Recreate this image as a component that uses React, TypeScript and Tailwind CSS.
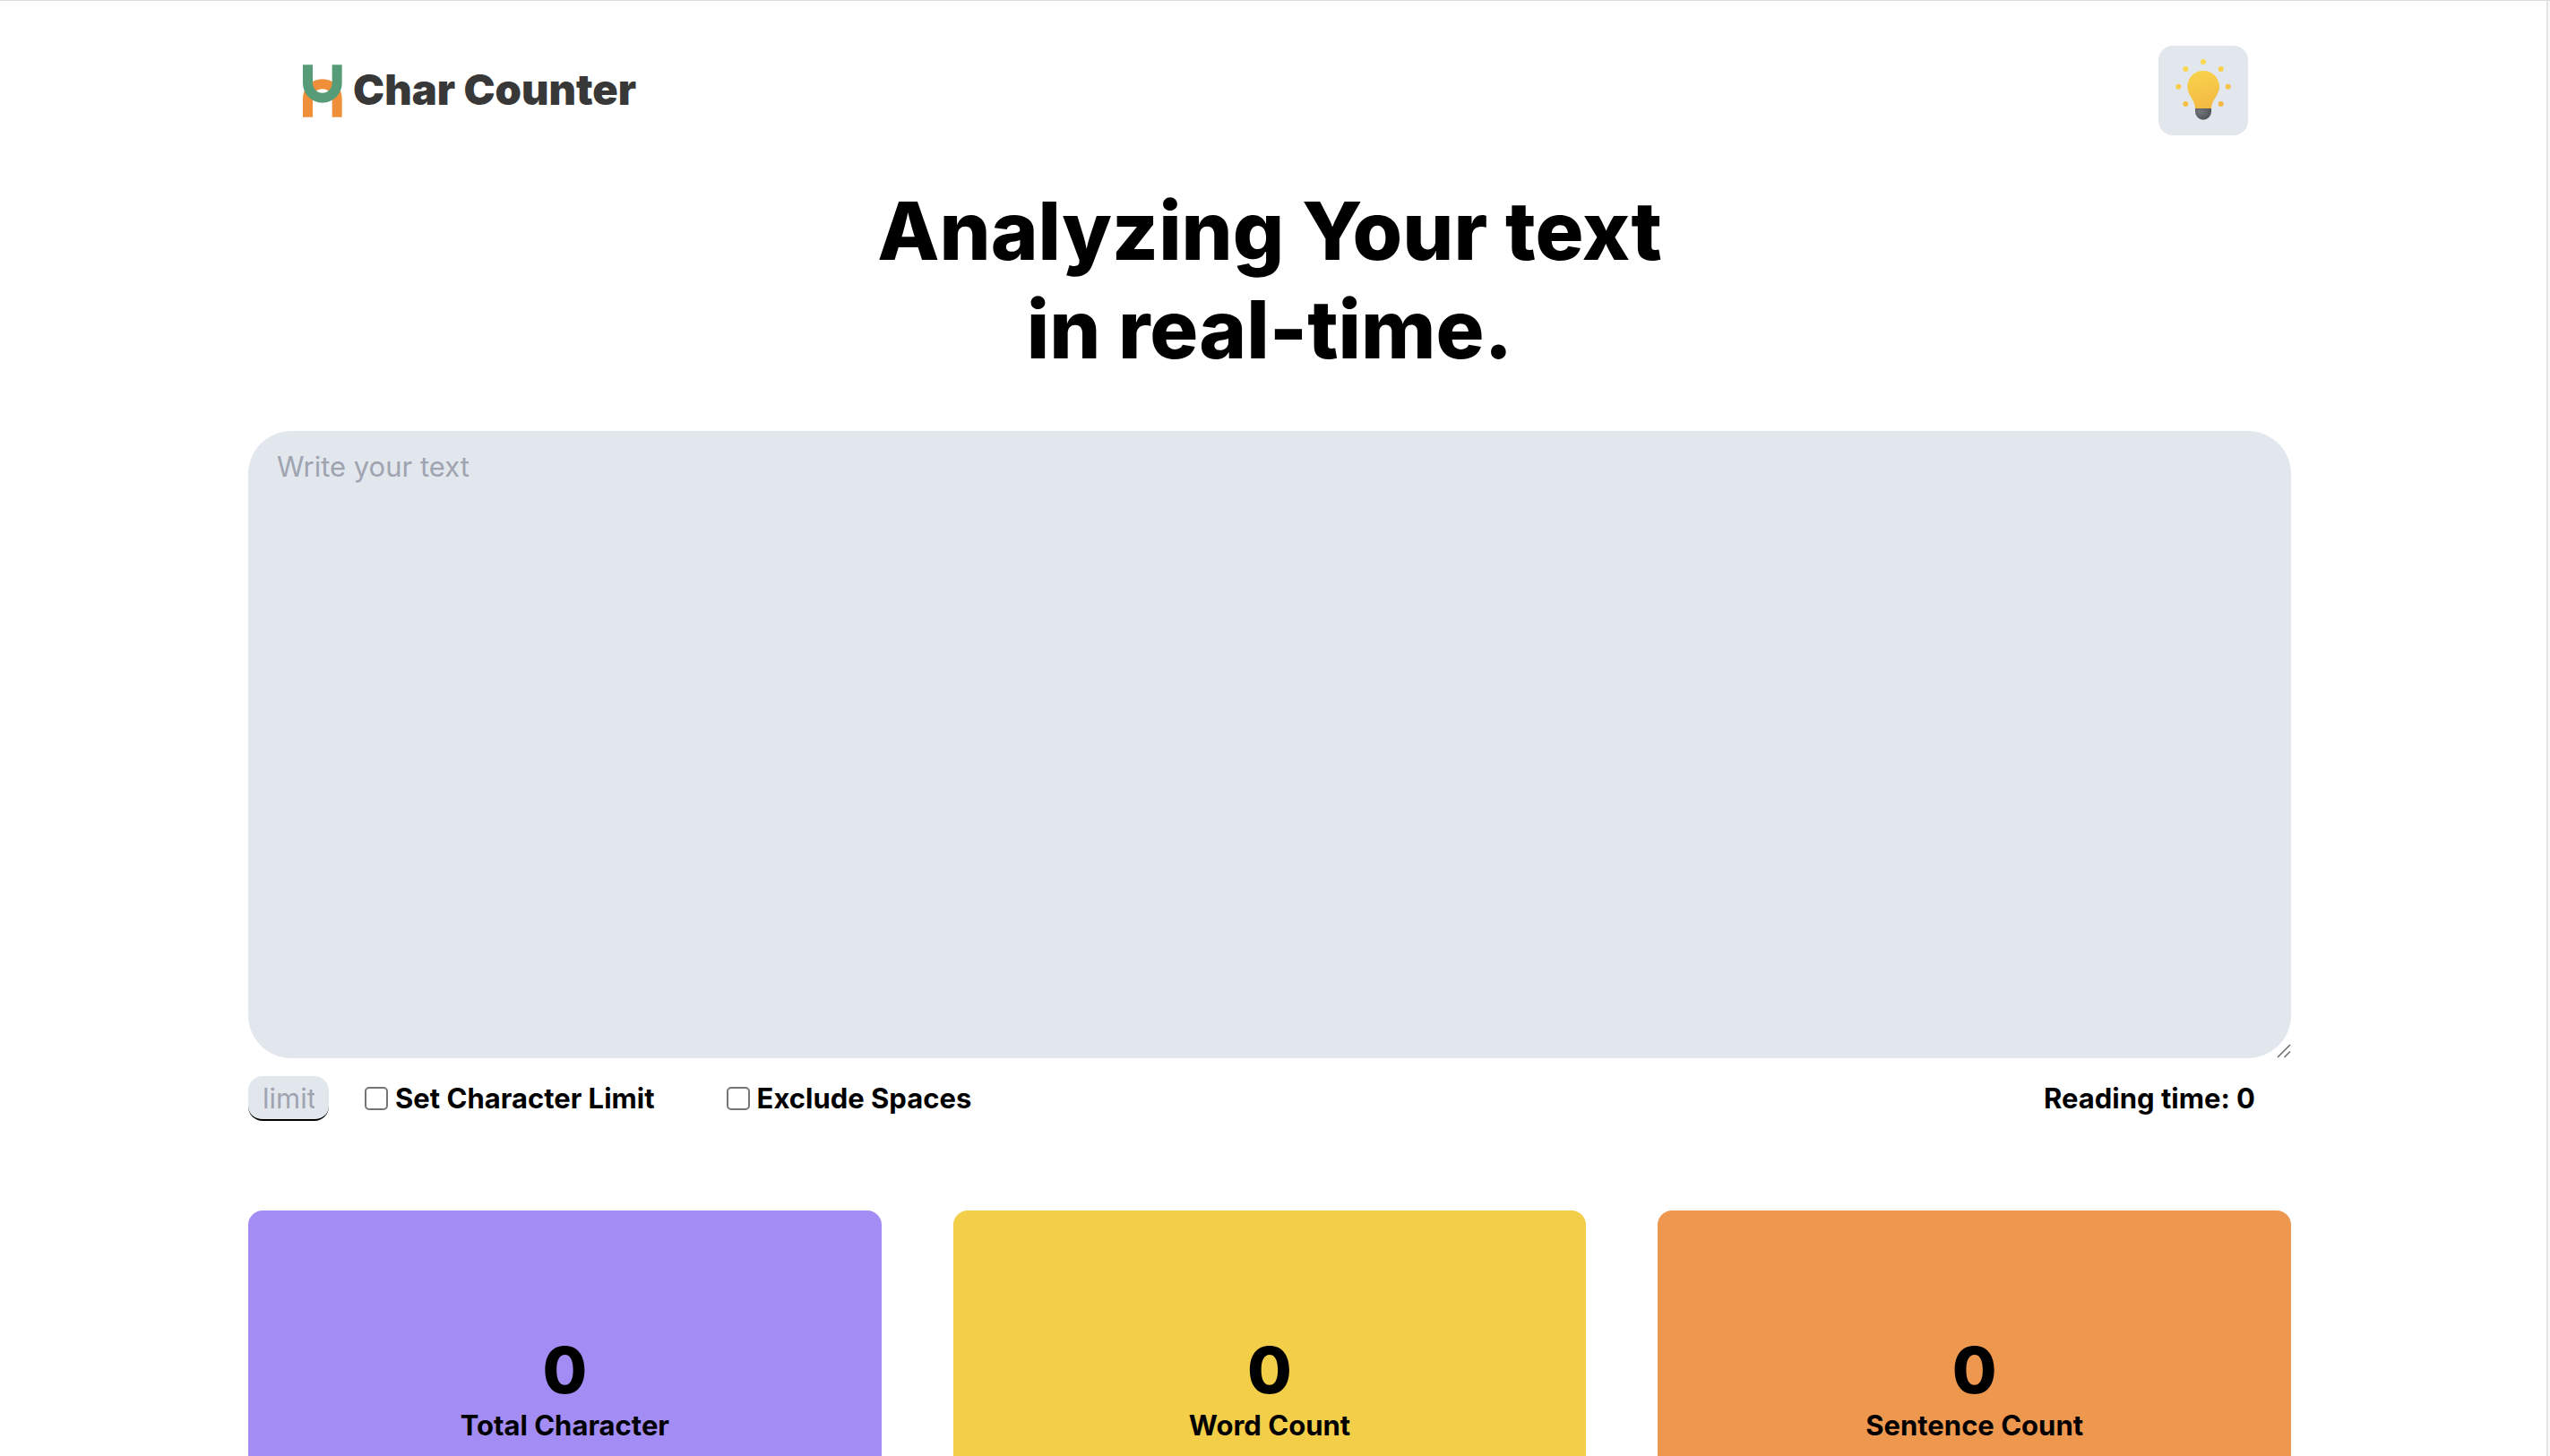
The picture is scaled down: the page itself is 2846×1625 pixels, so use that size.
import { useState } from "react";

const cards = [
  { id: "characters", label: "Total Character", color: "bg-[#a38cf4]" },
  { id: "words", label: "Word Count", color: "bg-[#f2ce49]" },
  { id: "sentences", label: "Sentence Count", color: "bg-[#ee974f]" },
];

const rays = [
  [237, 117],
  [178, 141],
  [296, 141],
  [154, 200],
  [320, 200],
  [178, 258],
  [296, 258],
];

function LogoMark() {
  return (
    <svg viewBox="55 68 132 176" className="h-[59px] w-11" fill="none" strokeWidth="33" aria-hidden="true">
      <path d="M71.5 244V182A49 49 0 0 1 169.5 182V244" stroke="#ef8f3a" />
      <path d="M71.5 68V130A49 49 0 0 0 169.5 130V68" stroke="#579c78" />
    </svg>
  );
}

function Bulb() {
  return (
    <svg viewBox="87 63 300 300" className="size-full" aria-hidden="true">
      <defs>
        <linearGradient id="glow" gradientUnits="userSpaceOnUse" x1="210" y1="110" x2="255" y2="275">
          <stop offset="0" stopColor="#fadb4e" />
          <stop offset="1" stopColor="#f3b843" />
        </linearGradient>
        <radialGradient id="base" cx="0.3" cy="0.3" r="0.8">
          <stop offset="0" stopColor="#72767b" />
          <stop offset="1" stopColor="#4d5156" />
        </radialGradient>
      </defs>
      <g fill="url(#glow)">
        {rays.map(([x, y]) => (
          <circle key={`${x}-${y}`} cx={x} cy={y} r="9" />
        ))}
        <path d="M237 147C207 147 184 170 184 200C184 229 210 245 210 273H264C264 245 291 229 291 200C291 170 267 147 237 147Z" />
      </g>
      <path d="M210 273H264V284A27 27 0 0 1 210 284Z" fill="url(#base)" />
    </svg>
  );
}

export default function App() {
  const [text, setText] = useState("");
  const [limit, setLimit] = useState("");
  const [noSpaces, setNoSpaces] = useState(false);

  const words = text.trim() ? text.trim().split(/\s+/).length : 0;
  const totals: Record<string, number> = {
    characters: noSpaces ? text.replace(/\s/g, "").length : text.length,
    words,
    sentences: text.split(/[.!?]+/).filter((s) => s.trim()).length,
  };

  return (
    <div className="flex h-screen overflow-hidden border-t border-[#dedede] bg-white font-['Inter',sans-serif] text-[31px] leading-[48px] text-black">
      <div className="min-w-0 flex-1 pr-2">
        <div className="mx-auto w-full max-w-[2280px]">
          <header className="flex items-center justify-between pt-[50px] pr-12 pl-[61px]">
            <a href="#" className="flex items-center gap-3">
              <LogoMark />
              <span className="pb-1 text-[47px] leading-none font-black text-[#383838]">Char Counter</span>
            </a>
            <button type="button" aria-label="Toggle theme" className="size-[100px] rounded-2xl bg-[#e2e7ee]">
              <Bulb />
            </button>
          </header>

          <main>
            <h1 className="mt-[52px] text-center text-[90px] leading-[110px] font-extrabold">
              Analyzing Your text
              <br />
              in real-time.
            </h1>

            <div className="relative mt-[58px]">
              <textarea
                aria-label="Your text"
                placeholder="Write your text"
                value={text}
                onChange={(e) => setText(e.target.value)}
                className="block h-[700px] w-full resize-none rounded-[48px] bg-[#e2e7ee] px-8 py-4 placeholder:text-[#9fa4b0]"
              />
              <svg viewBox="0 0 16 16" className="absolute right-0 bottom-0 size-4" fill="none" stroke="#6b6b6b" strokeWidth="1.5" aria-hidden="true">
                <path d="M1 15L15 1M8.500 15L15 8.500" />
              </svg>
            </div>

            <div className="mt-5 flex items-center justify-between pr-10">
              <div className="flex items-center">
                <input
                  type="text"
                  aria-label="Character limit"
                  placeholder="limit"
                  value={limit}
                  onChange={(e) => setLimit(e.target.value)}
                  className="h-[50px] w-[90px] rounded-2xl border-b-2 border-black bg-[#e2e7ee] px-4 placeholder:text-[#9fa4b0]"
                />
                <label className="ml-10 flex items-center gap-2 font-bold">
                  <input type="checkbox" className="size-[26px] appearance-none rounded-[5px] border-2 border-[#767676] bg-white checked:bg-blue-600" />
                  Set Character Limit
                </label>
                <label className="ml-20 flex items-center gap-2 font-bold">
                  <input
                    type="checkbox"
                    checked={noSpaces}
                    onChange={(e) => setNoSpaces(e.target.checked)}
                    className="size-[26px] appearance-none rounded-[5px] border-2 border-[#767676] bg-white checked:bg-blue-600"
                  />
                  Exclude Spaces
                </label>
              </div>
              <p className="font-bold">Reading time: {Math.ceil(words / 200)}</p>
            </div>

            <section className="mt-[100px] grid grid-cols-3 gap-20">
              {cards.map((card) => (
                <div key={card.id} className={`rounded-2xl py-[140px] text-center ${card.color}`}>
                  <p className="text-[72px] leading-[76px] font-extrabold">{totals[card.id]}</p>
                  <p className="font-bold">{card.label}</p>
                </div>
              ))}
            </section>
          </main>
        </div>
      </div>
      <div className="w-1 border-l-2 border-[#e4e4e4] bg-[#fafafa]" />
    </div>
  );
}
